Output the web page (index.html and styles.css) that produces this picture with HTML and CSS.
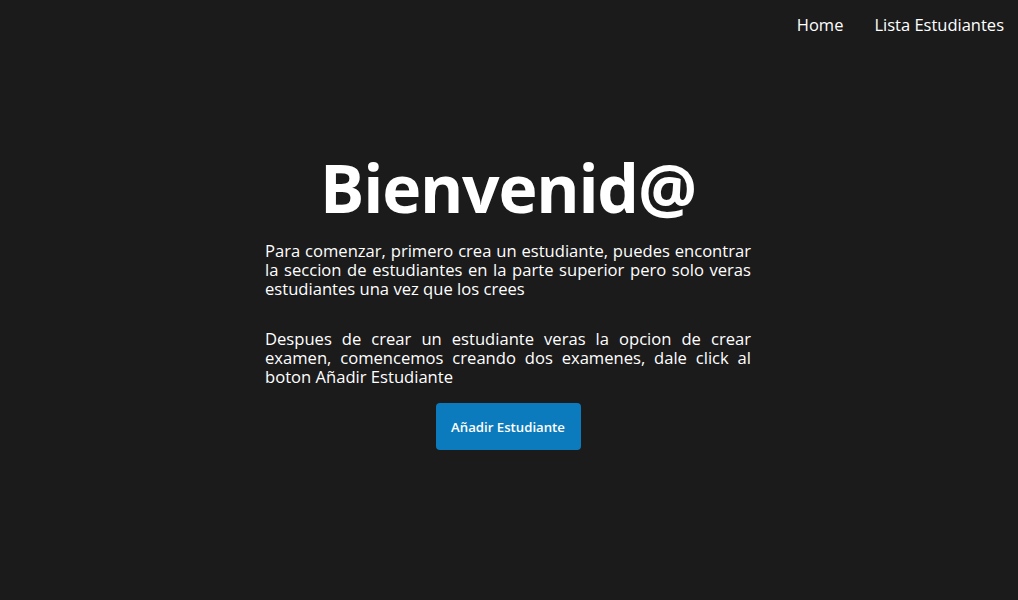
FILE: index.html
```html
<!DOCTYPE html>
<html lang="es">
<head>
<meta charset="utf-8">
<title>Bienvenid@</title>
<link rel="stylesheet" href="styles.css">
</head>
<body>
<nav class="nav">
  <a class="nav-link" href="#">Home</a>
  <a class="nav-link" href="#">Lista Estudiantes</a>
</nav>
<div class="page">
  <main class="main">
    <h1 class="title">Bienvenid@</h1>
    <p class="text">Para comenzar, primero crea un estudiante, puedes encontrar la seccion de estudiantes en la parte superior pero solo veras estudiantes una vez que los crees</p>
    <p class="text">Despues de crear un estudiante veras la opcion de crear examen, comencemos creando dos examenes, dale click al boton Añadir Estudiante</p>
    <button class="btn">Añadir Estudiante</button>
  </main>
</div>
</body>
</html>
```
FILE: styles.css
```css
html, body {
  margin: 0;
  padding: 0;
  background: #1b1b1b;
  color: #ffffff;
  font-family: "Open Sans", sans-serif;
  height: 100%;
}
.nav {
  display: flex;
  justify-content: flex-end;
  gap: 31px;
  padding: 15px 14px 0 0;
  font-size: 16.5px;
  line-height: 20px;
}
.nav-link {
  color: #ffffff;
  text-decoration: none;
}
.page {
  display: flex;
  justify-content: center;
  padding-right: 2px;
}
.main {
  width: 486px;
  padding-top: 112px;
  display: flex;
  flex-direction: column;
  align-items: center;
}
.title {
  margin: 0 0 14px;
  font-size: 66px;
  line-height: 80px;
  font-weight: bold;
  letter-spacing: -1.2px;
}
.text {
  margin: 0 0 31px;
  font-size: 16.6px;
  line-height: 19px;
  text-align: justify;
  align-self: stretch;
}
.btn {
  margin-top: -14px;
  width: 145px;
  height: 47px;
  background: #0b7bbd;
  color: #ffffff;
  border: none;
  border-radius: 4px;
  font-family: inherit;
  font-size: 13.2px;
  font-weight: 600;
}
```
